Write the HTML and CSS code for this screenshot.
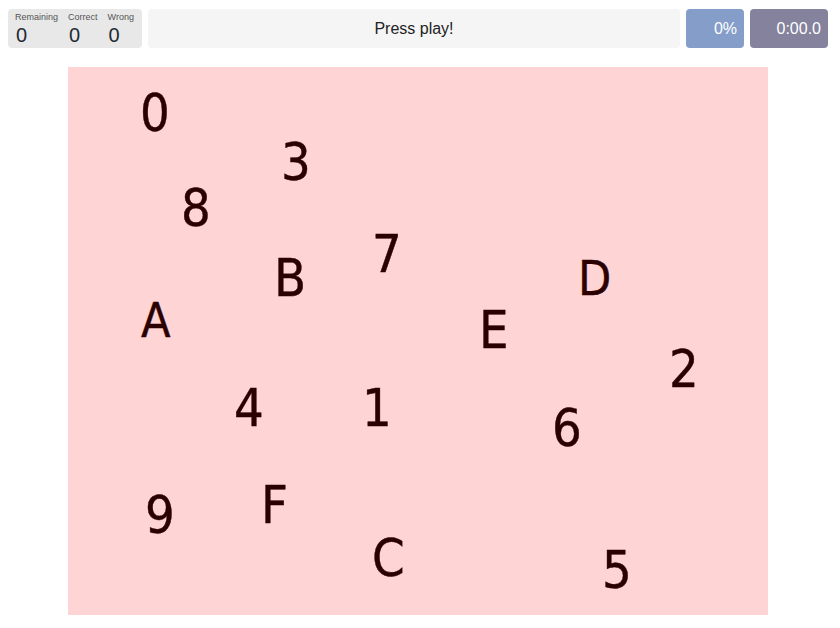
FILE: index.html
```html
<!DOCTYPE html>
<html>
<head>
<meta charset="utf-8">
<link rel="stylesheet" href="styles.css">
</head>
<body>
<div class="page">
  <div class="topbar">
    <div class="stats">
      <div class="stat"><div class="label">Remaining</div><div class="value">0</div></div>
      <div class="stat"><div class="label">Correct</div><div class="value">0</div></div>
      <div class="stat"><div class="label">Wrong</div><div class="value">0</div></div>
    </div>
    <div class="message">Press play!</div>
    <div class="pct">0%</div>
    <div class="time">0:00.0</div>
  </div>
  <div class="board">
    <span class="glyph" style="left:75px;top:26px">0</span>
    <span class="glyph" style="left:216px;top:75px">3</span>
    <span class="glyph" style="left:116px;top:121px">8</span>
    <span class="glyph" style="left:307px;top:167px">7</span>
    <span class="glyph" style="left:209px;top:191px">B</span>
    <span class="glyph small" style="left:76px;top:235px">A</span>
    <span class="glyph small" style="left:513px;top:193px">D</span>
    <span class="glyph" style="left:414px;top:243px">E</span>
    <span class="glyph" style="left:604px;top:282px">2</span>
    <span class="glyph" style="left:169px;top:321px">4</span>
    <span class="glyph" style="left:297px;top:321px">1</span>
    <span class="glyph" style="left:487px;top:341px">6</span>
    <span class="glyph" style="left:80px;top:428px">9</span>
    <span class="glyph" style="left:196px;top:418px">F</span>
    <span class="glyph" style="left:307px;top:471px">C</span>
    <span class="glyph" style="left:537px;top:483px">5</span>
  </div>
</div>
</body>
</html>
```

FILE: styles.css
```css
html, body {
  margin: 0;
  padding: 0;
  background: #ffffff;
}
.page {
  width: 820px;
  margin: 9px 0 0 8px;
  font-family: "Liberation Sans", Arial, sans-serif;
}
.topbar {
  display: flex;
  gap: 6px;
  height: 39px;
}
.stats {
  width: 134px;
  box-sizing: border-box;
  background: #e8e8e8;
  border-radius: 4px;
  display: flex;
  gap: 10px;
  padding: 3px 7px 0 7px;
}
.stat {
  display: flex;
  flex-direction: column;
}
.label {
  font-size: 9px;
  line-height: 10px;
  color: #555555;
}
.value {
  font-size: 20px;
  line-height: 26px;
  color: #222a33;
  padding-left: 1px;
}
.message {
  flex: 1;
  background: #f5f5f5;
  border-radius: 4px;
  display: flex;
  align-items: center;
  justify-content: center;
  font-size: 16px;
  color: #222222;
}
.pct, .time {
  border-radius: 4px;
  display: flex;
  align-items: center;
  justify-content: flex-end;
  font-size: 16px;
  color: #ffffff;
  padding-right: 7px;
  box-sizing: border-box;
}
.pct {
  width: 58px;
  background: #849dc9;
}
.time {
  width: 78px;
  background: #84829c;
}
.board {
  position: relative;
  width: 700px;
  height: 548px;
  margin: 19px auto 0 auto;
  background: #ffd4d4;
  overflow: hidden;
}
.glyph {
  position: absolute;
  font-family: "DejaVu Sans Condensed", "DejaVu Sans", sans-serif;
  font-stretch: condensed;
  font-size: 52px;
  line-height: 1;
  color: #2a0000;
  -webkit-text-stroke: 0.4px #2a0000;
  transform: translate(-3px, -6px);
}
.glyph.small {
  font-size: 48px;
}
```
